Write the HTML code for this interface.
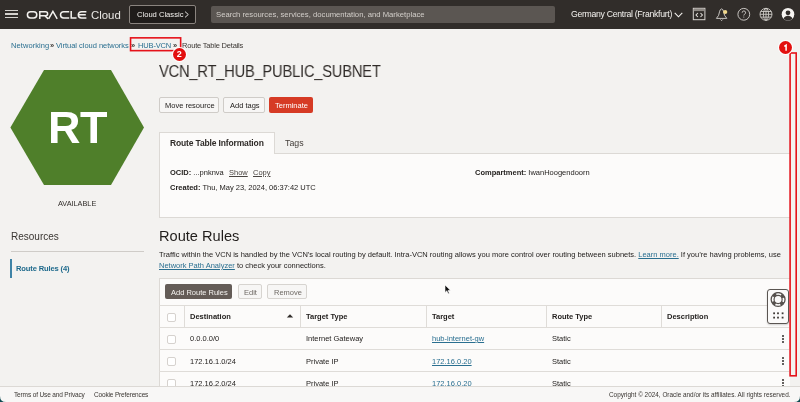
<!DOCTYPE html>
<html><head><meta charset="utf-8">
<style>
*{box-sizing:border-box;margin:0;padding:0}
html,body{width:800px;height:402px;overflow:hidden;background:#f3f2f0;font-family:"Liberation Sans",sans-serif;color:#252220;position:relative}
.a{position:absolute}
.t{position:absolute;white-space:nowrap;line-height:1;will-change:transform}
#hdr{left:0;top:0;width:800px;height:28.5px;background:#312d2a}
.ham{left:5px;width:12.5px;height:1.4px;background:#d5d2ce}
#cc{left:129px;top:4.5px;width:67px;height:19px;border:1px solid #8a847f;background:#1f1c1a;border-radius:2px}
#search{left:211px;top:5.5px;width:344px;height:17px;background:#5b5652;border-radius:2px}
.lnk{color:#2a6f90}
.sep{color:#3f3a36;font-weight:bold}
.btn{position:absolute;border:1px solid #cfccc8;background:#f7f6f5;border-radius:2px}
.panel{position:absolute;background:#fcfbfa;border:1px solid #dcd9d5}
.hl{position:absolute;height:1px;background:#dfdcd8}
.vl{position:absolute;width:1px;background:#dfdcd8}
.cb{position:absolute;width:9px;height:9px;border:1px solid #d6d2ce;background:#fff;border-radius:2px}
.kb{position:absolute;width:2px;height:2px;background:#312d2a;border-radius:1px}
.red{position:absolute;border:1.5px solid #e3100f}
.badge{position:absolute;width:13px;height:13px;border-radius:50%;background:#e3100f;color:#fff;font-weight:bold;font-size:9px;line-height:13px;text-align:center;box-shadow:0 0 0 1px #fff}
</style></head><body>
<!-- HEADER -->
<div id="hdr" class="a">
  <div class="a ham" style="top:10px"></div>
  <div class="a ham" style="top:13.2px"></div>
  <div class="a ham" style="top:16.5px"></div>
  <svg class="a" style="left:25px;top:10px" width="64" height="10" viewBox="0 0 64 10">
    <g fill="none" stroke="#f4f2ef" stroke-width="1.5">
      <rect x="2.4" y="1.65" width="9.4" height="6.4" rx="3.2"/>
      <path d="M14.8 8.9 V1.65 H20.6 a2 2 0 0 1 0 4 H15.5 M19.8 5.65 L23.2 8.9"/>
      <path d="M23.6 8.9 L27.9 1.4 L32.2 8.9"/>
      <path d="M44.2 1.65 H38.7 a3.2 3.2 0 0 0 0 6.4 H44.2"/>
      <path d="M46.2 0.9 V8.05 H51.5"/>
      <path d="M61.4 1.65 H56.5 a3.2 3.2 0 0 0 0 6.4 H61.4 M54.2 4.85 H60.8"/>
    </g>
  </svg>
  <div class="t" style="left:90.5px;top:9.5px;font-size:11.4px;color:#e9e7e4">Cloud</div>
  <div id="cc" class="a"></div>
  <div class="t" style="left:136.5px;top:10.5px;font-size:7.6px;color:#f4f2ef">Cloud Classic</div>
  <svg class="a" style="left:184px;top:11px" width="6" height="7" viewBox="0 0 6 7"><path d="M1 0.6 L4.3 3.5 L1 6.4" fill="none" stroke="#f4f2ef" stroke-width="0.9"/></svg>
  <div id="search" class="a"></div>
  <div class="t" style="left:215.5px;top:11px;font-size:7.7px;color:#d3cfca">Search resources, services, documentation, and Marketplace</div>
  <div class="t" style="left:571px;top:10px;font-size:8.7px;letter-spacing:-0.3px;color:#f4f2ef">Germany Central (Frankfurt)</div>
  <svg class="a" style="left:673.5px;top:12px" width="9" height="6" viewBox="0 0 9 6"><path d="M0.7 0.8 L4.5 4.8 L8.3 0.8" fill="none" stroke="#f4f2ef" stroke-width="1.1"/></svg>
  <!-- code editor icon -->
  <svg class="a" style="left:692px;top:7px" width="14" height="14" viewBox="0 0 14 14">
    <rect x="1.3" y="1.3" width="11.6" height="11.4" fill="none" stroke="#d6d3cf" stroke-width="1"/>
    <rect x="1.8" y="1.8" width="10.6" height="2.3" fill="#8e8984"/>
    <path d="M5.9 6 L4 8 L5.9 10 M8.5 6 L10.4 8 L8.5 10" fill="none" stroke="#e6e3df" stroke-width="1.05"/>
  </svg>
  <!-- bell -->
  <svg class="a" style="left:715px;top:7px" width="14" height="15" viewBox="0 0 14 15">
    <path d="M1.4 11.4 L3.6 8.4 L4.7 4.2 Q5.2 2.1 6.6 1.9 Q8 2.1 8.5 4.2 L9.6 8.4 L11.8 11.4 Z" fill="none" stroke="#d6d3cf" stroke-width="0.9" stroke-linejoin="round"/>
    <path d="M5.5 12.5 L6.6 13.6 L7.7 12.5" fill="none" stroke="#d6d3cf" stroke-width="0.9"/>
    <circle cx="10.2" cy="5" r="2.1" fill="#f2d88a"/>
  </svg>
  <!-- help -->
  <svg class="a" style="left:736px;top:7px" width="16" height="15" viewBox="0 0 16 15">
    <circle cx="7.8" cy="7.3" r="5.9" fill="none" stroke="#d6d3cf" stroke-width="0.9"/>
    <path d="M6.2 5.7 a1.7 1.7 0 1 1 2.4 1.5 c-0.6 0.3 -0.8 0.6 -0.8 1.3" fill="none" stroke="#d6d3cf" stroke-width="0.9"/>
    <circle cx="7.8" cy="10" r="0.55" fill="#d6d3cf"/>
  </svg>
  <!-- globe -->
  <svg class="a" style="left:759px;top:7px" width="15" height="15" viewBox="0 0 15 15">
    <g fill="none" stroke="#d6d3cf" stroke-width="0.85">
      <circle cx="7" cy="7.3" r="6"/>
      <ellipse cx="7" cy="7.3" rx="2.6" ry="6"/>
      <line x1="1" y1="7.3" x2="13" y2="7.3"/>
      <line x1="7" y1="1.3" x2="7" y2="13.3"/>
      <line x1="1.7" y1="4.5" x2="12.3" y2="4.5"/>
      <line x1="1.7" y1="10.1" x2="12.3" y2="10.1"/>
    </g>
  </svg>
  <!-- avatar -->
  <svg class="a" style="left:781px;top:7px" width="15" height="15" viewBox="0 0 15 15">
    <circle cx="7" cy="7.3" r="6.3" fill="#f6f4f1"/>
    <circle cx="7" cy="5.8" r="2.4" fill="#312d2a"/>
    <path d="M2.6 11.6 C3.5 9.6 5 8.8 7 8.8 C9 8.8 10.5 9.6 11.4 11.6 C10.3 12.8 8.8 13.5 7 13.5 C5.2 13.5 3.7 12.8 2.6 11.6 Z" fill="#312d2a"/>
  </svg>
</div>

<!-- BREADCRUMB -->
<div class="t lnk" style="left:10.5px;top:41.5px;font-size:7.5px;letter-spacing:0.08px">Networking</div>
<div class="t sep" style="left:50px;top:41.5px;font-size:7.5px">»</div>
<div class="t lnk" style="left:56.4px;top:41.5px;font-size:7.5px;letter-spacing:-0.02px">Virtual cloud networks</div>
<div class="t sep" style="left:130.8px;top:41.5px;font-size:7.5px">»</div>
<div class="t lnk" style="left:138px;top:41.5px;font-size:7.5px;letter-spacing:-0.15px">HUB-VCN</div>
<div class="t sep" style="left:173px;top:41.5px;font-size:7.5px">»</div>
<div class="t" style="left:181.5px;top:41.5px;font-size:7.5px;letter-spacing:-0.2px;color:#3c3834">Route Table Details</div>

<!-- LEFT: hexagon -->
<svg class="a" style="left:0;top:60px" width="155" height="135" viewBox="0 60 155 135">
  <polygon points="44,70 111,70 144,127.4 111,185 44,185 10.4,127.4" fill="#4f7f2a"/>
</svg>
<div class="t" style="left:48px;top:105px;font-size:45px;letter-spacing:-0.6px;font-weight:bold;color:#fff">RT</div>
<div class="t" style="left:57.8px;top:199.5px;font-size:7.3px;color:#312d2a">AVAILABLE</div>

<div class="t" style="left:10.5px;top:232.2px;font-size:10px;color:#3a3632">Resources</div>
<div class="hl" style="left:10.6px;top:251px;width:133.5px;background:#cfccc8"></div>
<div class="a" style="left:10.4px;top:259px;width:1.6px;height:19px;background:#3f83a6"></div>
<div class="t lnk" style="left:15.6px;top:265px;font-size:7.6px;font-weight:bold;letter-spacing:-0.15px;color:#1f6a8c">Route Rules (4)</div>

<!-- MAIN -->
<div class="t" style="left:158.5px;top:63.9px;font-size:15.7px;letter-spacing:-0.2px;transform:scaleX(0.934);transform-origin:0 0;color:#2f2b28">VCN_RT_HUB_PUBLIC_SUBNET</div>

<div class="btn" style="left:158.75px;top:97px;width:60.7px;height:16px"></div>
<div class="t" style="left:165px;top:101.5px;font-size:7.5px">Move resource</div>
<div class="btn" style="left:223.4px;top:97px;width:41.3px;height:16px"></div>
<div class="t" style="left:229.5px;top:101.5px;font-size:7.5px">Add tags</div>
<div class="a" style="left:268.75px;top:97px;width:43.75px;height:16px;background:#d63b25;border-radius:2px"></div>
<div class="t" style="left:274.5px;top:101.5px;font-size:7.5px;color:#fff">Terminate</div>

<!-- tabs/panel -->
<div class="panel" style="left:159px;top:153px;width:631px;height:65px;border-right:none"></div>
<div class="a" style="left:159px;top:132px;width:116px;height:22px;background:#fcfbfa;border:1px solid #dcd9d5;border-bottom:none"></div>
<div class="t" style="left:170px;top:139px;font-size:8.5px;font-weight:bold;letter-spacing:-0.15px;color:#2f2b28">Route Table Information</div>
<div class="t" style="left:284.5px;top:138.5px;font-size:8.8px;color:#45403c">Tags</div>

<div class="t" style="left:170px;top:169px;font-size:7.5px"><b>OCID:</b> ...pnknva</div>
<div class="t" style="left:228.75px;top:169px;font-size:7.5px;text-decoration:underline;color:#4a4541">Show</div>
<div class="t" style="left:252.5px;top:169px;font-size:7.5px;text-decoration:underline;color:#4a4541">Copy</div>
<div class="t" style="left:170px;top:184px;font-size:7.5px"><b>Created:</b> Thu, May 23, 2024, 06:37:42 UTC</div>
<div class="t" style="left:475px;top:169px;font-size:7.5px"><b>Compartment:</b> IwanHoogendoorn</div>

<!-- Route rules -->
<div class="t" style="left:158.5px;top:228.8px;font-size:14.6px;color:#201d1b">Route Rules</div>
<div class="t" style="left:159px;top:251px;font-size:7.5px">Traffic within the VCN is handled by the VCN’s local routing by default. Intra-VCN routing allows you more control over routing between subnets. <span class="lnk" style="text-decoration:underline">Learn more.</span> If you’re having problems, use</div>
<div class="t" style="left:159px;top:261.5px;font-size:7.5px"><span class="lnk" style="text-decoration:underline">Network Path Analyzer</span> to check your connections.</div>

<!-- table -->
<div class="panel" style="left:159px;top:278px;width:631px;height:130px;border-right:none"></div>
<div class="a" style="left:164.8px;top:284.2px;width:67.4px;height:15.3px;background:#645c57;border-radius:2px"></div>
<div class="t" style="left:170.5px;top:289px;font-size:7.5px;color:#f5f3f0">Add Route Rules</div>
<div class="btn" style="left:237.7px;top:284.2px;width:24.1px;height:15.3px;border-color:#d7d4d0"></div>
<div class="t" style="left:243.5px;top:289px;font-size:7.5px;color:#6e6964">Edit</div>
<div class="btn" style="left:267.3px;top:284.2px;width:39.3px;height:15.3px;border-color:#d7d4d0"></div>
<div class="t" style="left:273.5px;top:289px;font-size:7.5px;color:#6e6964">Remove</div>

<div class="hl" style="left:159px;top:305px;width:630px"></div>
<div class="hl" style="left:159px;top:327px;width:630px"></div>
<div class="hl" style="left:159px;top:349px;width:630px"></div>
<div class="hl" style="left:159px;top:371px;width:630px"></div>
<div class="vl" style="left:184px;top:305px;height:22px"></div>
<div class="vl" style="left:300px;top:305px;height:22px"></div>
<div class="vl" style="left:426px;top:305px;height:22px"></div>
<div class="vl" style="left:546px;top:305px;height:22px"></div>
<div class="vl" style="left:661px;top:305px;height:22px"></div>

<div class="cb" style="left:167px;top:312.5px"></div>
<div class="cb" style="left:167px;top:334.5px"></div>
<div class="cb" style="left:167px;top:356.5px"></div>
<div class="cb" style="left:167px;top:378.5px"></div>

<div class="t" style="left:190px;top:313px;font-size:7.5px;font-weight:bold">Destination</div>
<svg class="a" style="left:286px;top:313px" width="8" height="6" viewBox="0 0 8 6"><path d="M0.8 4.6 L4 1.2 L7.2 4.6 Z" fill="#312d2a"/></svg>
<div class="t" style="left:305.9px;top:313px;font-size:7.5px;font-weight:bold">Target Type</div>
<div class="t" style="left:431.7px;top:313px;font-size:7.5px;font-weight:bold">Target</div>
<div class="t" style="left:552.3px;top:313px;font-size:7.5px;font-weight:bold">Route Type</div>
<div class="t" style="left:667.4px;top:313px;font-size:7.5px;font-weight:bold">Description</div>

<div class="t" style="left:190px;top:335px;font-size:7.5px">0.0.0.0/0</div>
<div class="t" style="left:305.9px;top:335px;font-size:7.5px">Internet Gateway</div>
<div class="t lnk" style="left:431.7px;top:335px;font-size:7.5px;text-decoration:underline">hub-internet-gw</div>
<div class="t" style="left:552.3px;top:335px;font-size:7.5px">Static</div>

<div class="t" style="left:190px;top:357.5px;font-size:7.5px">172.16.1.0/24</div>
<div class="t" style="left:305.9px;top:357.5px;font-size:7.5px">Private IP</div>
<div class="t lnk" style="left:431.7px;top:357.5px;font-size:7.5px;text-decoration:underline">172.16.0.20</div>
<div class="t" style="left:552.3px;top:357.5px;font-size:7.5px">Static</div>

<div class="t" style="left:190px;top:379.5px;font-size:7.5px">172.16.2.0/24</div>
<div class="t" style="left:305.9px;top:379.5px;font-size:7.5px">Private IP</div>
<div class="t lnk" style="left:431.7px;top:379.5px;font-size:7.5px;text-decoration:underline">172.16.0.20</div>
<div class="t" style="left:552.3px;top:379.5px;font-size:7.5px">Static</div>

<!-- kebabs -->
<div class="kb" style="left:782.2px;top:334.5px"></div><div class="kb" style="left:782.2px;top:337.5px"></div><div class="kb" style="left:782.2px;top:340.5px"></div>
<div class="kb" style="left:782.2px;top:357px"></div><div class="kb" style="left:782.2px;top:360px"></div><div class="kb" style="left:782.2px;top:363px"></div>
<div class="kb" style="left:782.2px;top:379px"></div><div class="kb" style="left:782.2px;top:382px"></div><div class="kb" style="left:782.2px;top:385px"></div>

<!-- help widget -->
<div class="a" style="left:767px;top:289.3px;width:22.2px;height:34.5px;background:#fbfaf9;border:1px solid #5a5551;border-radius:3px;box-shadow:0 1px 2px rgba(0,0,0,0.18)"></div>
<svg class="a" style="left:769px;top:292px" width="18" height="30" viewBox="0 0 18 30">
  <g fill="none" stroke="#55504c">
    <circle cx="9.1" cy="7.5" r="6.95" stroke-width="1.3"/>
    <circle cx="9.1" cy="7.5" r="4.05" stroke-width="1.2"/>
    <circle cx="9.1" cy="7.5" r="5.5" stroke-width="2.9" stroke-dasharray="3.6 5.04" stroke-dashoffset="-2.52"/>
  </g>
  <g fill="#3f3a36">
    <rect x="4.2" y="20.4" width="1.8" height="1.8"/><rect x="8.1" y="20.4" width="1.8" height="1.8"/><rect x="12.7" y="20.4" width="1.8" height="1.8"/>
    <rect x="4.2" y="24.7" width="1.8" height="1.8"/><rect x="8.1" y="24.7" width="1.8" height="1.8"/><rect x="12.7" y="24.7" width="1.8" height="1.8"/>
  </g>
</svg>

<!-- cursor -->
<svg class="a" style="left:444px;top:284px" width="8" height="11" viewBox="0 0 8 11"><path d="M1 1 L1 8.5 L2.8 6.8 L4.2 9.8 L5.3 9.3 L4 6.4 L6.4 6.3 Z" fill="#111" stroke="#fff" stroke-width="0.6"/></svg>

<!-- footer -->
<div class="a" style="left:0;top:386px;width:800px;height:16px;background:#f8f7f6;border-top:1px solid #dcd9d5"></div>
<div class="t" style="left:13.75px;top:392.2px;font-size:6.5px;letter-spacing:-0.14px;color:#3a3632">Terms of Use and Privacy</div>
<div class="t" style="left:93.75px;top:392.2px;font-size:6.5px;letter-spacing:-0.16px;color:#3a3632">Cookie Preferences</div>
<div class="t" style="left:609px;top:392px;font-size:6.4px;color:#3a3632">Copyright © 2024, Oracle and/or its affiliates. All rights reserved.</div>

<!-- annotations -->
<svg class="a" style="left:0;top:0" width="800" height="402"><rect x="130.55" y="37.85" width="50.1" height="12.8" fill="none" stroke="#e5121a" stroke-width="1.6"/><rect x="790.1" y="53" width="6.1" height="322.8" fill="none" stroke="#e5121a" stroke-width="1.6"/></svg>
<div class="badge" style="left:172.7px;top:47.8px">2</div>

<div class="badge" style="left:779.2px;top:41.2px"></div><svg class="a" style="left:779.2px;top:41.2px" width="13" height="13" viewBox="0 0 13 13"><path d="M5.3 5.3 L7.1 4.2 V9.8" fill="none" stroke="#fff" stroke-width="1.5"/></svg>

<!-- window corners -->
<svg class="a" style="left:0;top:396px" width="6" height="6" viewBox="0 0 6 6"><path d="M0 0 Q0 6 6 6 L0 6 Z" fill="#0f4b52"/></svg>
<svg class="a" style="left:794px;top:396px" width="6" height="6" viewBox="0 0 6 6"><path d="M6 0 Q6 6 0 6 L6 6 Z" fill="#0f4b52"/></svg>
</body></html>
